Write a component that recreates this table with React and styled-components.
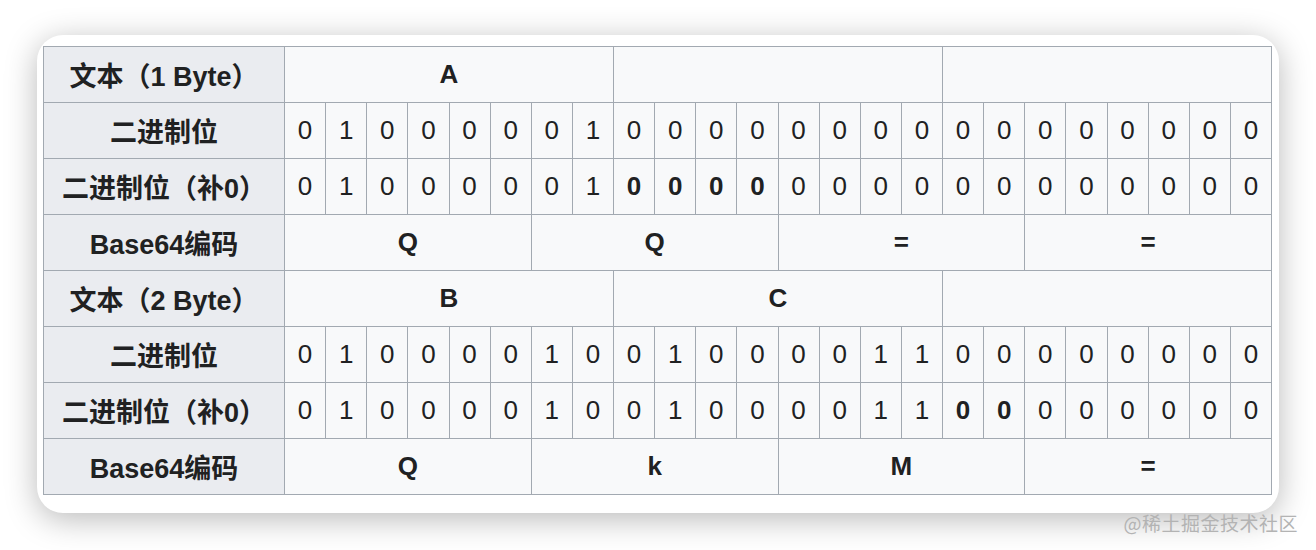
import React from "react";
import styled, { createGlobalStyle } from "styled-components";

const Global = createGlobalStyle`
  html, body { margin: 0; padding: 0; background: #ffffff; }
  body { font-family: "Liberation Sans", "Noto Sans CJK SC", sans-serif; }
`;

const Page = styled.div`
  position: relative;
  width: 1316px;
  height: 550px;
  padding: 35px 0 0 37px;
  box-sizing: border-box;
`;

const Card = styled.div`
  width: 1242px;
  height: 478px;
  box-sizing: border-box;
  background: #ffffff;
  border-radius: 26px;
  box-shadow: 0 6px 32px rgba(0, 0, 0, 0.28);
  padding: 11px 7px 0 6px;
`;

const Table = styled.table`
  border-collapse: collapse;
  table-layout: fixed;
  width: 1229px;
  color: #202122;
  font-family: "Liberation Sans", "Noto Sans CJK SC", sans-serif;
`;

const HeadCell = styled.th`
  background: #eaecf0;
  border: 1px solid #a2a9b1;
  height: 55px;
  padding: 0;
  font-size: 27px;
  font-weight: bold;
  text-align: center;
  white-space: nowrap;
`;

const Cell = styled.td`
  background: #f8f9fa;
  border: 1px solid #a2a9b1;
  height: 55px;
  padding: 0;
  font-size: 26px;
  font-weight: ${(p) => (p.$bold ? "bold" : "normal")};
  text-align: center;
`;

const Watermark = styled.div`
  position: absolute;
  right: 18px;
  top: 509px;
  font-size: 19px;
  color: #b3b3b3;
  font-family: "Noto Sans CJK SC", sans-serif;
  letter-spacing: 0.5px;
`;

const bits = (s, boldIdx = []) =>
  s.split("").map((c, i) => ({ t: c, span: 1, bold: boldIdx.includes(i) }));

const span = (arr, n) => arr.map((t) => ({ t, span: n, bold: true }));

const b1 = "010000010000000000000000";
const b2 = "010000100100001100000000";

const rows = [
  { h: "文本（1 Byte）", cells: span(["A", "", ""], 8) },
  { h: "二进制位", cells: bits(b1) },
  { h: "二进制位（补0）", cells: bits(b1, [8, 9, 10, 11]) },
  { h: "Base64编码", cells: span(["Q", "Q", "=", "="], 6) },
  { h: "文本（2 Byte）", cells: span(["B", "C", ""], 8) },
  { h: "二进制位", cells: bits(b2) },
  { h: "二进制位（补0）", cells: bits(b2, [16, 17]) },
  { h: "Base64编码", cells: span(["Q", "k", "M", "="], 6) },
];

export default function App() {
  return (
    <>
      <Global />
      <Page>
        <Card>
          <Table>
            <colgroup>
              <col style={{ width: 241 }} />
              {Array.from({ length: 24 }).map((_, i) => (
                <col key={i} />
              ))}
            </colgroup>
            <tbody>
              {rows.map((r, ri) => (
                <tr key={ri}>
                  <HeadCell>{r.h}</HeadCell>
                  {r.cells.map((c, ci) => (
                    <Cell key={ci} colSpan={c.span} $bold={c.bold}>
                      {c.t}
                    </Cell>
                  ))}
                </tr>
              ))}
            </tbody>
          </Table>
        </Card>
        <Watermark>@稀土掘金技术社区</Watermark>
      </Page>
    </>
  );
}
